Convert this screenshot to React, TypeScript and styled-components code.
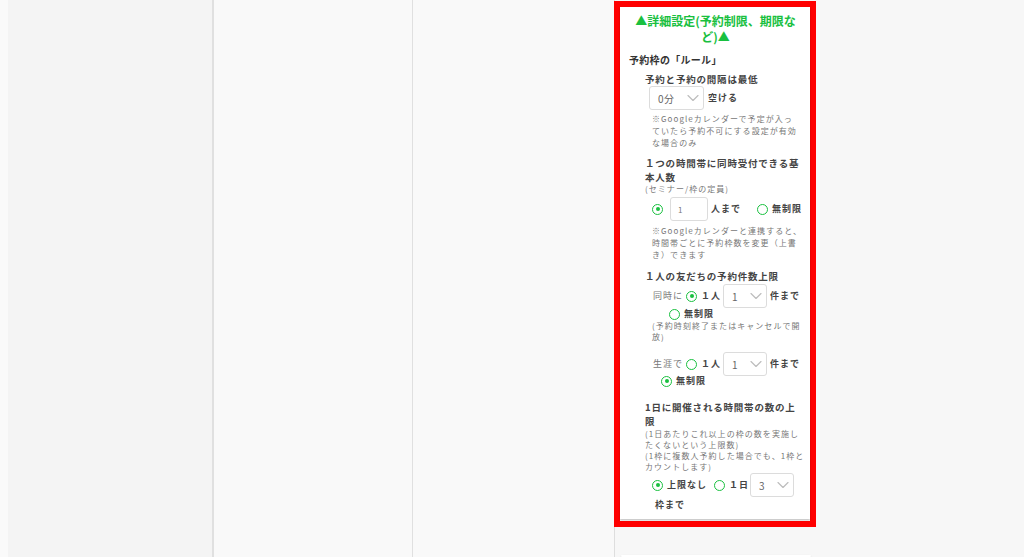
import React from 'react';
import styled, { createGlobalStyle } from 'styled-components';
import { ChevronDown } from 'lucide-react';

let GlobalStyle = createGlobalStyle`
  html, body {
    margin: 0;
    padding: 0;
    height: 100%;
    overflow: hidden;
  }
  body {
    font-family: "Noto Sans CJK JP", "Noto Sans", sans-serif;
    color: #444;
    background: #f7f7f7;
  }
  #root {
    height: 100%;
  }
`;

let Page = styled.div`
  display: flex;
  height: 557px;
`;

let Column = styled.div<{ $bg: string; $width?: number; $border?: string }>`
  flex: ${p => (p.$width ? `0 0 ${p.$width}px` : '1 1 auto')};
  background: ${p => p.$bg};
  border-right: ${p => p.$border || 'none'};
`;

let Lane = styled.div`
  flex: 1 1 auto;
  background: #f7f7f7;
  border-left: 1px solid #dedede;
  padding-top: 1px;
  display: flex;
  flex-direction: column;
  gap: 28px;
`;

let Highlight = styled.div`
  width: 190px;
  margin-left: -1px;
  border: 6px solid #ff0000;
  padding-bottom: 2px;
  background: #f7f7f7;
`;

let Card = styled.div`
  background: #fff;
  box-shadow: 0 1px 2px rgba(0, 0, 0, 0.25);
  padding: 6px 8px 7px 9px;
`;

let NextCard = styled.div`
  width: 190px;
  height: 40px;
  margin-left: 6px;
  background: #fff;
  border-radius: 4px;
  box-shadow: 0 1px 2px rgba(0, 0, 0, 0.15);
`;

let Title = styled.div`
  color: #19c03f;
  font-size: 12px;
  font-weight: 700;
  line-height: 16px;
  text-align: center;
  padding: 0 4px;
`;

let RuleHeading = styled.div`
  margin-top: 8px;
  font-size: 10px;
  letter-spacing: 0.3px;
  font-weight: 700;
  line-height: 14px;
  color: #333;
`;

let Section = styled.div<{ $gap: number }>`
  margin-top: ${p => p.$gap}px;
  padding-left: 16px;
`;

let Label = styled.div<{ $lh?: number }>`
  font-size: 9.5px;
  letter-spacing: 0.8px;
  font-weight: 700;
  line-height: ${p => p.$lh || 14}px;
  color: #444;
  white-space: nowrap;
`;

let Note = styled.div<{ $gap?: number; $indent?: number; $lh?: number }>`
  margin-top: ${p => p.$gap || 0}px;
  padding-left: ${p => p.$indent ?? 7}px;
  font-size: 8px;
  letter-spacing: 1.05px;
  line-height: ${p => p.$lh || 12}px;
  color: #777;
  white-space: nowrap;
`;

let Row = styled.div<{ $gap?: number; $indent?: number; $h?: number }>`
  display: flex;
  align-items: center;
  margin-top: ${p => p.$gap || 0}px;
  padding-left: ${p => p.$indent ?? 7}px;
  height: ${p => (p.$h ? `${p.$h}px` : 'auto')};
`;

let Text = styled.span<{ $ml?: number; $plain?: boolean }>`
  margin-left: ${p => p.$ml || 0}px;
  font-size: 9px;
  letter-spacing: 1px;
  font-weight: ${p => (p.$plain ? 400 : 700)};
  color: ${p => (p.$plain ? '#777' : '#444')};
  white-space: nowrap;
  line-height: 12px;
`;

let Radio = styled.span<{ $checked?: boolean; $ml?: number }>`
  flex: 0 0 auto;
  box-sizing: border-box;
  width: 11px;
  height: 11px;
  margin-left: ${p => p.$ml || 0}px;
  border-radius: 50%;
  border: 1.8px solid #19c03f;
  display: flex;
  align-items: center;
  justify-content: center;

  &::after {
    content: '';
    width: 4px;
    height: 4px;
    border-radius: 50%;
    background: ${p => (p.$checked ? '#19c03f' : 'transparent')};
  }
`;

let SelectBox = styled.div<{ $width: number; $ml?: number }>`
  box-sizing: border-box;
  flex: 0 0 auto;
  width: ${p => p.$width}px;
  height: 24px;
  margin-left: ${p => p.$ml || 0}px;
  border: 1px solid #dcdcdc;
  border-radius: 3px;
  background: #fff;
  display: flex;
  align-items: center;
  justify-content: space-between;
  padding: 0 0 0 8px;
  font-size: 10px;
  color: #666;
  letter-spacing: 0.5px;

  svg {
    color: #bdbdbd;
  }
`;

let NumberInput = styled.div<{ $ml?: number }>`
  box-sizing: border-box;
  width: 39px;
  height: 24px;
  margin-left: ${p => p.$ml || 0}px;
  border: 1px solid #dcdcdc;
  border-radius: 3px;
  background: #fff;
  display: flex;
  align-items: center;
  padding-left: 7px;
  font-size: 8px;
  color: #777;
`;

function Select({ value, width, ml }: { value: string; width: number; ml?: number }) {
  return (
    <SelectBox $width={width} $ml={ml}>
      <span>{value}</span>
      <ChevronDown size={20} strokeWidth={1.4} />
    </SelectBox>
  );
}

export default function App() {
  return (
    <>
      <GlobalStyle />
      <Page>
        <Column $bg="#fafafa" $width={8} />
        <Column $bg="#f4f4f4" $width={204} $border="2px solid #e0e0e0" />
        <Column $bg="#f9f9f9" $width={198} $border="1px solid #e0e0e0" />
        <Column $bg="#f9f9f9" $width={201} />
        <Lane>
          <Highlight>
            <Card>
              <Title>▲詳細設定(予約制限、期限など)▲</Title>
              <RuleHeading>予約枠の「ルール」</RuleHeading>

              <Section $gap={5}>
                <Label>予約と予約の間隔は最低</Label>
                <Row $indent={4}>
                  <Select value="0分" width={55} />
                  <Text $ml={4}>空ける</Text>
                </Row>
                <Note $gap={3}>
                  ※Googleカレンダーで予定が入っ
                  <br />
                  ていたら予約不可にする設定が有効
                  <br />
                  な場合のみ
                </Note>
              </Section>

              <Section $gap={7}>
                <Label>
                  １つの時間帯に同時受付できる基
                  <br />
                  本人数
                </Label>
                <Note $indent={0} $lh={9}>(セミナー/枠の定員)</Note>
                <Row $gap={4}>
                  <Radio $checked />
                  <NumberInput $ml={7}>1</NumberInput>
                  <Text $ml={3}>人まで</Text>
                  <Radio $ml={16} />
                  <Text $ml={4}>無制限</Text>
                </Row>
                <Note $gap={4}>
                  ※Googleカレンダーと連携すると、
                  <br />
                  時間帯ごとに予約枠数を変更（上書
                  <br />
                  き）できます
                </Note>
              </Section>

              <Section $gap={8}>
                <Label>１人の友だちの予約件数上限</Label>
                <Row $gap={1} $indent={8}>
                  <Text $plain>同時に</Text>
                  <Radio $checked $ml={3} />
                  <Text $ml={4}>１人</Text>
                  <Select value="1" width={44} ml={2} />
                  <Text $ml={3}>件まで</Text>
                </Row>
                <Row $indent={24} $h={12}>
                  <Radio />
                  <Text $ml={4}>無制限</Text>
                </Row>
                <Note $indent={7} $lh={11}>
                  (予約時刻終了またはキャンセルで開
                  <br />
                  放)
                </Note>
                <Row $gap={10} $indent={8}>
                  <Text $plain>生涯で</Text>
                  <Radio $ml={3} />
                  <Text $ml={4}>１人</Text>
                  <Select value="1" width={44} ml={2} />
                  <Text $ml={3}>件まで</Text>
                </Row>
                <Row $indent={16} $h={10}>
                  <Radio $checked />
                  <Text $ml={4}>無制限</Text>
                </Row>
              </Section>

              <Section $gap={15}>
                <Label $lh={13.5}>
                  1日に開催される時間帯の数の上
                  <br />
                  限
                </Label>
                <Note $indent={0} $lh={11}>
                  (1日あたりこれ以上の枠の数を実施し
                  <br />
                  たくないという上限数)
                  <br />
                  (1枠に複数人予約した場合でも、1枠と
                  <br />
                  カウントします)
                </Note>
                <Row $gap={1}>
                  <Radio $checked />
                  <Text $ml={4}>上限なし</Text>
                  <Radio $ml={7} />
                  <Text $ml={4}>１日</Text>
                  <Select value="3" width={44} ml={1} />
                </Row>
                <Row $indent={10} $h={15}>
                  <Text>枠まで</Text>
                </Row>
              </Section>
            </Card>
          </Highlight>
          <NextCard />
        </Lane>
      </Page>
    </>
  );
}
